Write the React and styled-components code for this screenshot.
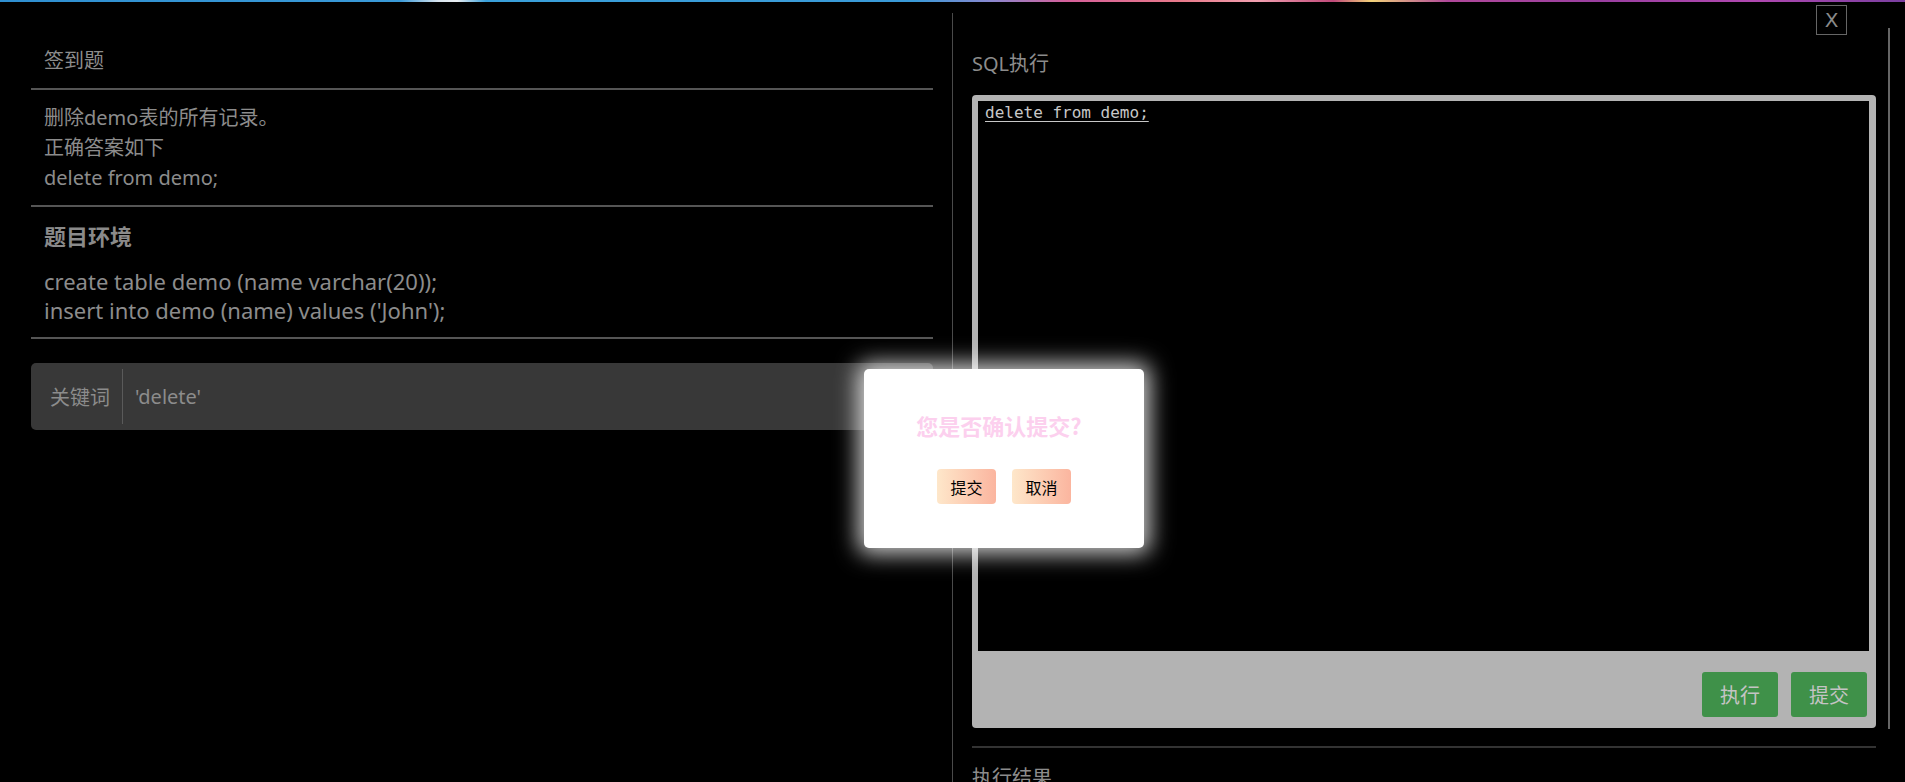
import React from 'react';
import styled, { createGlobalStyle } from 'styled-components';

const GlobalStyle = createGlobalStyle`
  html, body {
    margin: 0;
    padding: 0;
    background: #000;
  }
  body {
    font-family: "Noto Sans", "Noto Sans CJK SC", sans-serif;
    color: #8c8c8c;
  }
  * {
    box-sizing: border-box;
  }
`;

const App = () => (
  <React.Fragment>
    <GlobalStyle />
    <Page>
      <TopStripe />
      <Main>
        <LeftPanel>
          <PanelTitle>签到题</PanelTitle>
          <Section>
            <TextLine>删除demo表的所有记录。</TextLine>
            <TextLine>正确答案如下</TextLine>
            <TextLine>delete from demo;</TextLine>
          </Section>
          <EnvSection>
            <EnvHeading>题目环境</EnvHeading>
            <EnvBody>
              <EnvLine>create table demo (name varchar(20));</EnvLine>
              <EnvLine>insert into demo (name) values ('John');</EnvLine>
            </EnvBody>
          </EnvSection>
          <KeywordBar>
            <KeywordLabel>关键词</KeywordLabel>
            <KeywordValue>'delete'</KeywordValue>
          </KeywordBar>
        </LeftPanel>

        <RightPanel>
          <RightContent>
            <RightTitle>SQL执行</RightTitle>
            <EditorFrame>
              <Editor>
                <Code>delete from demo;</Code>
              </Editor>
              <EditorToolbar>
                <GreenButton>执行</GreenButton>
                <GreenButton>提交</GreenButton>
              </EditorToolbar>
            </EditorFrame>
            <ResultRule />
            <ResultTitle>执行结果</ResultTitle>
          </RightContent>
          <Rail />
        </RightPanel>
      </Main>

      <CloseButton>X</CloseButton>

      <Dialog>
        <DialogTitle>您是否确认提交?</DialogTitle>
        <DialogActions>
          <PeachButton>提交</PeachButton>
          <PeachButton>取消</PeachButton>
        </DialogActions>
      </Dialog>
    </Page>
  </React.Fragment>
);

const Page = styled.div`
  position: relative;
  height: 782px;
  overflow: hidden;
  display: flex;
  flex-direction: column;
`
const TopStripe = styled.div`
  height: 2px;
  flex: none;
  background: linear-gradient(90deg,
    #2f8fd0 0%, #3a9ad8 21%, #d8e4ee 23%, #e9eef2 24%, #3aa0da 25.5%,
    #3a9ad8 48%, #8a88d0 52%, #d6609a 56%, #e87a8a 62%, #f2a0b0 66%,
    #c04a7a 70%, #f3d27a 72%, #b0489a 76%, #9a3fa0 84%, #b048b0 92%, #7a3fa0 100%);
`
const Main = styled.div`
  flex: 1;
  display: flex;
  padding-left: 31px;
`
const LeftPanel = styled.div`
  width: 902px;
  flex: none;
  padding-top: 44px;
`
const PanelTitle = styled.div`
  font-size: 20px;
  line-height: 30px;
  padding: 0 0 12px 13px;
  border-bottom: 2px solid #555;
`
const Section = styled.div`
  padding: 13px 0 12px 13px;
  border-bottom: 2px solid #555;
`
const TextLine = styled.div`
  font-size: 20px;
  line-height: 30px;
`
const EnvSection = styled.div`
  padding: 14px 0 12px 13px;
  border-bottom: 2px solid #555;
`
const EnvHeading = styled.div`
  font-size: 22px;
  font-weight: 700;
  line-height: 30px;
  color: #8a8a8a;
`
const EnvBody = styled.div`
  margin-top: 16px;
`
const EnvLine = styled.div`
  font-size: 22px;
  line-height: 29px;
`
const KeywordBar = styled.div`
  margin-top: 24px;
  height: 67px;
  background: #383838;
  border-radius: 5px;
  display: flex;
  align-items: center;
`
const KeywordLabel = styled.div`
  font-size: 20px;
  padding: 0 12px 0 19px;
  height: 55px;
  display: flex;
  align-items: center;
  border-right: 1px solid #5a5a5a;
`
const KeywordValue = styled.div`
  font-size: 20px;
  padding-left: 12px;
`
const RightPanel = styled.div`
  margin: 11px 0 0 19px;
  border-left: 1px solid #4a4a4a;
  padding-left: 19px;
  display: flex;
  align-items: flex-start;
`
const RightContent = styled.div`
  width: 904px;
  padding-top: 36px;
`
const RightTitle = styled.div`
  font-size: 20px;
  line-height: 30px;
  margin-bottom: 16px;
`
const EditorFrame = styled.div`
  background: #b3b3b3;
  border-radius: 4px;
  padding: 6px 7px 11px 6px;
`
const Editor = styled.div`
  height: 550px;
  background: #000;
  padding: 0 7px;
`
const Code = styled.span`
  font-family: "DejaVu Sans Mono", "Liberation Mono", monospace;
  font-size: 16px;
  line-height: 19px;
  color: #c8c8c8;
  text-decoration: underline;
  text-underline-offset: 3px;
`
const EditorToolbar = styled.div`
  display: flex;
  justify-content: flex-end;
  gap: 13px;
  padding: 21px 2px 0 0;
`
const GreenButton = styled.button`
  height: 45px;
  width: 76px;
  border: none;
  border-radius: 3px;
  background: #3f9149;
  color: #c4c4c4;
  font-family: "Noto Sans CJK SC", sans-serif;
  font-size: 20px;
  padding: 0;
`
const ResultRule = styled.div`
  margin-top: 18px;
  height: 2px;
  background: #333;
`
const ResultTitle = styled.div`
  margin-top: 15px;
  font-size: 20px;
  line-height: 30px;
`
const Rail = styled.div`
  margin: 15px 0 0 12px;
  width: 2px;
  height: 701px;
  background: #666;
`
const CloseButton = styled.div`
  position: absolute;
  top: 5px;
  right: 58px;
  width: 31px;
  height: 30px;
  border: 1px solid #666;
  color: #8a8a8a;
  font-family: "DejaVu Sans", sans-serif;
  font-size: 20px;
  display: flex;
  align-items: center;
  justify-content: center;
`
const Dialog = styled.div`
  position: absolute;
  left: 864px;
  top: 369px;
  width: 280px;
  height: 179px;
  background: #fff;
  border-radius: 5px;
  box-shadow: 0 0 22px 6px rgba(255, 255, 255, 0.8);
  display: flex;
  flex-direction: column;
  align-items: center;
  padding-top: 41px;
`
const DialogTitle = styled.div`
  font-family: "Noto Sans CJK SC", sans-serif;
  font-size: 22px;
  font-weight: 700;
  line-height: 30px;
  color: #fcd0ee;
  padding-right: 10px;
`
const DialogActions = styled.div`
  display: flex;
  gap: 16px;
  margin-top: 29px;
`
const PeachButton = styled.button`
  width: 59px;
  height: 35px;
  border: none;
  border-radius: 4px;
  background: linear-gradient(90deg, #fee7ca, #fbb59f);
  color: #000;
  font-family: "Noto Sans CJK SC", sans-serif;
  font-size: 16px;
  padding: 0;
`

export default App;
